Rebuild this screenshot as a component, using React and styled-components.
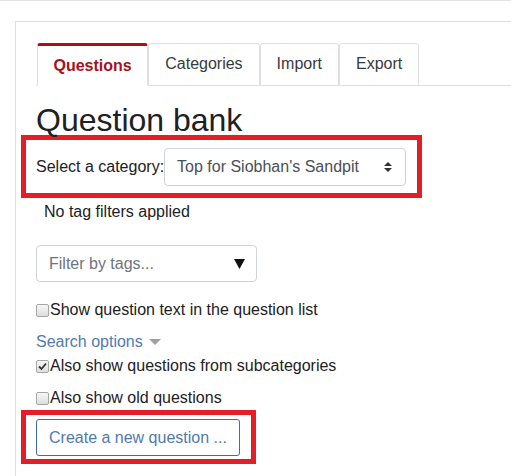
import React from 'react';
import styled, { createGlobalStyle, css } from 'styled-components';

const GlobalStyle = createGlobalStyle`
  html, body {
    margin: 0;
    padding: 0;
    background: #fff;
  }
  body {
    font-family: "Liberation Sans", Arial, sans-serif;
    font-size: 16px;
    color: #1d2125;
    overflow: hidden;
  }
`;

const Page = styled.div`
  border-top: 1px solid #e3e3e3;
  padding: 20px 0 0 15px;
`;

const Card = styled.div`
  border: 1px solid #dfdfdf;
  border-right: none;
  border-bottom: none;
  padding: 21px 0 40px 20px;
  min-height: 480px;
`;

const TabBar = styled.ul`
  display: flex;
  list-style: none;
  margin: 0;
  padding: 0 0 0 1px;
  height: 42px;
  border-bottom: 1px solid #dfdfdf;
`;

const Tab = styled.li`
  box-sizing: border-box;
  height: 43px;
  margin-bottom: -1px;
  padding: 0 16px 2px;
  display: flex;
  align-items: center;
  border: 1px solid #dfdfdf;
  border-radius: 3px 3px 0 0;
  color: #373a3c;

  ${(p) =>
    p.$active &&
    css`
      border-top: 3px solid #a8101d;
      border-bottom-color: #fff;
      padding: 1px 15.5px 0;
      color: #a8101d;
      font-weight: bold;
    `}
`;

const Heading = styled.h2`
  margin: 19px 0 0;
  font-size: 32px;
  line-height: 30px;
  font-weight: normal;
  color: #1d2125;
`;

const Highlight = styled.div`
  width: fit-content;
  margin-left: -15px;
  border: 5px solid #e31e26;
  padding: ${(p) => p.$pad};
  display: flex;
  align-items: center;
`;

const Select = styled.div`
  box-sizing: border-box;
  width: 242px;
  height: 38px;
  padding: 0 13px 0 12px;
  display: flex;
  align-items: center;
  justify-content: space-between;
  border: 1px solid #ced4da;
  border-radius: 4px;
  color: #495057;
`;

const NoTags = styled.div`
  margin: 3px 0 0 8px;
  line-height: 22px;
`;

const FilterBox = styled.div`
  box-sizing: border-box;
  width: 221px;
  height: 37px;
  margin-top: 22px;
  padding: 0 11px 0 12px;
  display: flex;
  align-items: center;
  justify-content: space-between;
  border: 1px solid #ced4da;
  border-radius: 4px;
  color: #6c757d;
`;

const CheckRow = styled.div`
  margin-top: ${(p) => p.$top}px;
  line-height: 22px;
  display: flex;
  align-items: center;
`;

const Box = styled.span`
  box-sizing: border-box;
  width: 13px;
  height: 13px;
  margin-right: 1px;
  border: 1px solid #a6a6a6;
  border-radius: 2px;
  background: linear-gradient(#f6f6f6, #dedede);
  display: flex;
  align-items: center;
  justify-content: center;
`;

const SearchLink = styled.div`
  margin-top: 10px;
  line-height: 22px;
  color: #5279b4;
  display: flex;
  align-items: center;
`;

const Caret = styled.span`
  margin-left: 6px;
  width: 0;
  height: 0;
  border-left: 6px solid transparent;
  border-right: 6px solid transparent;
  border-top: 6px solid #a0a0a0;
`;

const Button = styled.button`
  box-sizing: border-box;
  width: 204px;
  height: 37px;
  padding: 0 12px;
  text-align: left;
  border: 1px solid #3f6ca8;
  border-radius: 3px;
  background: #fff;
  color: #5079b3;
  font-family: inherit;
  font-size: 16px;
`;

const UpDown = () => (
  <svg width="8" height="12" viewBox="0 0 8 12">
    <path d="M0 5 L4 1 L8 5 Z M0 7 L4 11 L8 7 Z" fill="#333" />
  </svg>
);

const DownArrow = () => (
  <svg width="11" height="10" viewBox="0 0 11 10">
    <path d="M0 0 L11 0 L5.5 10 Z" fill="#111" />
  </svg>
);

const Checkbox = ({ checked }) => (
  <Box>
    {checked && (
      <svg width="9" height="9" viewBox="0 0 9 9">
        <path d="M1 4.5 L3.5 7 L8 1.5" stroke="#333" strokeWidth="1.8" fill="none" />
      </svg>
    )}
  </Box>
);

const tabs = ['Questions', 'Categories', 'Import', 'Export'];

export default function App() {
  return (
    <>
      <GlobalStyle />
      <Page>
        <Card>
          <TabBar>
            {tabs.map((t, i) => (
              <Tab key={t} $active={i === 0}>
                {t}
              </Tab>
            ))}
          </TabBar>
          <Heading>Question bank</Heading>
          <Highlight $pad="8px 11px 7px 10px">
            <span>Select a category:</span>
            <Select>
              <span>Top for Siobhan's Sandpit</span>
              <UpDown />
            </Select>
          </Highlight>
          <NoTags>No tag filters applied</NoTags>
          <FilterBox>
            <span>Filter by tags...</span>
            <DownArrow />
          </FilterBox>
          <CheckRow $top={17}>
            <Checkbox />
            Show question text in the question list
          </CheckRow>
          <SearchLink>
            Search options
            <Caret />
          </SearchLink>
          <CheckRow $top={2}>
            <Checkbox checked />
            Also show questions from subcategories
          </CheckRow>
          <CheckRow $top={10}>
            <Checkbox />
            Also show old questions
          </CheckRow>
          <Highlight $pad="4px 11px 3px 10px" style={{ marginTop: 1 }}>
            <Button>Create a new question ...</Button>
          </Highlight>
        </Card>
      </Page>
    </>
  );
}
